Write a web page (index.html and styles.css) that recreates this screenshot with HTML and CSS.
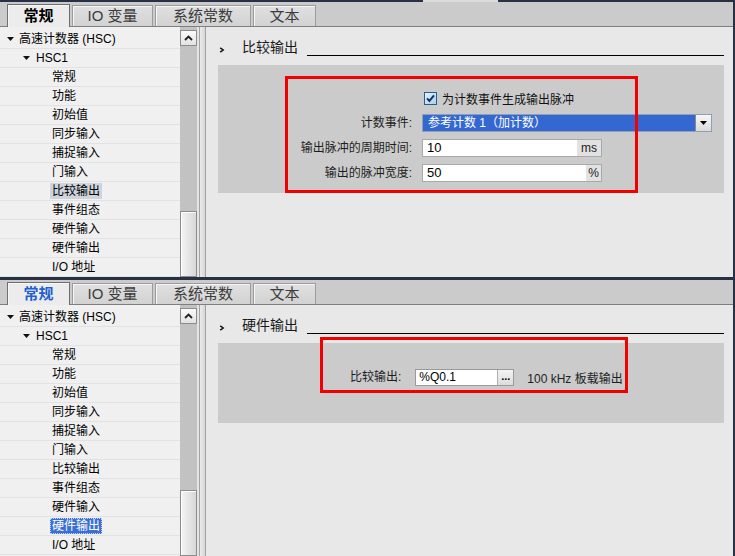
FILE: index.html
```html
<!DOCTYPE html>
<html lang="zh">
<head>
<meta charset="utf-8">
<title>HSC</title>
<link rel="stylesheet" href="styles.css">
</head>
<body>
<div class="topstrip"><div class="strip-piece"></div></div>

<section class="panel panel-top">
  <div class="tabbar">
    <div class="tab t1 active">常规</div>
    <div class="tab t2">IO 变量</div>
    <div class="tab t3">系统常数</div>
    <div class="tab t4">文本</div>
  </div>
  <div class="pbody">
    <div class="tree">
      <div class="row lvl0"><svg class="tri" width="7" height="4" viewBox="0 0 7 4"><path d="M0 0h7L3.5 4z" fill="#111"/></svg><span>高速计数器 (HSC)</span></div>
      <div class="row lvl1"><svg class="tri" width="7" height="4" viewBox="0 0 7 4"><path d="M0 0h7L3.5 4z" fill="#111"/></svg><span>HSC1</span></div>
      <div class="row leaf"><span class="lbl">常规</span></div>
      <div class="row leaf"><span class="lbl">功能</span></div>
      <div class="row leaf"><span class="lbl">初始值</span></div>
      <div class="row leaf"><span class="lbl">同步输入</span></div>
      <div class="row leaf"><span class="lbl">捕捉输入</span></div>
      <div class="row leaf"><span class="lbl">门输入</span></div>
      <div class="row leaf"><span class="lbl sel-inactive">比较输出</span></div>
      <div class="row leaf"><span class="lbl">事件组态</span></div>
      <div class="row leaf"><span class="lbl">硬件输入</span></div>
      <div class="row leaf"><span class="lbl">硬件输出</span></div>
      <div class="row leaf"><span class="lbl">I/O 地址</span></div>
    </div>
    <div class="vscroll">
      <div class="sb-up"><svg width="9" height="6" viewBox="0 0 9 6"><path d="M1 5L4.5 1.5 8 5" fill="none" stroke="#222" stroke-width="1.8"/></svg></div>
      <div class="sb-track"></div>
      <div class="sb-thumb"></div>
    </div>
    <div class="splitter"></div>
    <div class="content">
      <div class="sec-head">
        <div class="chev"><svg width="6" height="6" viewBox="0 0 6 6"><path d="M1.2 0.8L4.2 3 1.2 5.2" fill="none" stroke="#111" stroke-width="1.5"/></svg></div>
        <div class="sec-title">比较输出</div>
        <div class="sec-line"></div>
      </div>
      <div class="group group-top">
        <div class="form">
          <div class="flabel"></div>
          <div class="check-row">
            <svg class="cb" width="13" height="13" viewBox="0 0 13 13"><defs><linearGradient id="cbg" x1="0" y1="0" x2="1" y2="1"><stop offset="0" stop-color="#e8f3fd"/><stop offset="1" stop-color="#a9cdee"/></linearGradient></defs><rect x="0.5" y="0.5" width="12" height="12" fill="url(#cbg)" stroke="#2b5d8c"/><path d="M3 6.4l2.4 2.5 4.6-5.6" fill="none" stroke="#17325f" stroke-width="2"/></svg>
            <span>为计数事件生成输出脉冲</span>
          </div>
          <div class="flabel">计数事件:</div>
          <div class="select">
            <div class="select-text">参考计数 1（加计数）</div>
            <div class="select-btn"><svg width="7" height="4" viewBox="0 0 7 4"><path d="M0 0h7L3.5 4z" fill="#000"/></svg></div>
          </div>
          <div class="flabel">输出脉冲的周期时间:</div>
          <div class="input">
            <div class="input-text">10</div>
            <div class="unit unit-ms">ms</div>
          </div>
          <div class="flabel">输出的脉冲宽度:</div>
          <div class="input">
            <div class="input-text">50</div>
            <div class="unit unit-pct">%</div>
          </div>
        </div>
        <div class="redframe rf-top"></div>
      </div>
    </div>
  </div>
</section>

<section class="panel panel-bottom">
  <div class="tabbar">
    <div class="tab t1 active focus">常规</div>
    <div class="tab t2">IO 变量</div>
    <div class="tab t3">系统常数</div>
    <div class="tab t4">文本</div>
  </div>
  <div class="pbody">
    <div class="tree">
      <div class="row lvl0"><svg class="tri" width="7" height="4" viewBox="0 0 7 4"><path d="M0 0h7L3.5 4z" fill="#111"/></svg><span>高速计数器 (HSC)</span></div>
      <div class="row lvl1"><svg class="tri" width="7" height="4" viewBox="0 0 7 4"><path d="M0 0h7L3.5 4z" fill="#111"/></svg><span>HSC1</span></div>
      <div class="row leaf"><span class="lbl">常规</span></div>
      <div class="row leaf"><span class="lbl">功能</span></div>
      <div class="row leaf"><span class="lbl">初始值</span></div>
      <div class="row leaf"><span class="lbl">同步输入</span></div>
      <div class="row leaf"><span class="lbl">捕捉输入</span></div>
      <div class="row leaf"><span class="lbl">门输入</span></div>
      <div class="row leaf"><span class="lbl">比较输出</span></div>
      <div class="row leaf"><span class="lbl">事件组态</span></div>
      <div class="row leaf"><span class="lbl">硬件输入</span></div>
      <div class="row leaf"><span class="lbl sel-active">硬件输出</span></div>
      <div class="row leaf"><span class="lbl">I/O 地址</span></div>
    </div>
    <div class="vscroll">
      <div class="sb-up"><svg width="9" height="6" viewBox="0 0 9 6"><path d="M1 5L4.5 1.5 8 5" fill="none" stroke="#222" stroke-width="1.8"/></svg></div>
      <div class="sb-track"></div>
      <div class="sb-thumb"></div>
    </div>
    <div class="splitter"></div>
    <div class="content">
      <div class="sec-head">
        <div class="chev"><svg width="6" height="6" viewBox="0 0 6 6"><path d="M1.2 0.8L4.2 3 1.2 5.2" fill="none" stroke="#111" stroke-width="1.5"/></svg></div>
        <div class="sec-title">硬件输出</div>
        <div class="sec-line"></div>
      </div>
      <div class="group group-bottom">
        <div class="hw-row">
          <div class="hw-label">比较输出:</div>
          <div class="input input-hw">
            <div class="input-text">%Q0.1</div>
            <div class="dots">...</div>
          </div>
          <div class="hw-note">100 kHz 板载输出</div>
        </div>
        <div class="redframe rf-bottom"></div>
      </div>
    </div>
  </div>
</section>
</body>
</html>
```

FILE: styles.css
```css
* { box-sizing: border-box; }
html, body { margin: 0; padding: 0; }
body {
  background: #283043;
  width: 735px;
  height: 556px;
  overflow: hidden;
  font-family: "Liberation Sans", "Noto Sans CJK SC", sans-serif;
  font-size: 12px;
  color: #111;
}

.topstrip { height: 2px; display: flex; }
.strip-piece { margin-left: 423px; width: 75px; background: #dcdcdc; }

.panel {
  width: 733px;
  background: #e8e8e8;
  display: flex;
  flex-direction: column;
  overflow: hidden;
}
.panel-top { height: 275px; }
.panel-bottom { height: 276px; margin-top: 3px; }

/* tabs */
.tabbar {
  height: 25px;
  flex: none;
  background: #cbcbcb;
  border-bottom: 1px solid #7f7f7f;
  display: flex;
  align-items: flex-end;
  padding-left: 7px;
  gap: 2px;
}
.tab {
  height: 21px;
  border: 1px solid #9c9c9c;
  border-bottom: none;
  background: linear-gradient(#e0e0e0, #d2d2d2);
  box-shadow: inset 1px 1px 0 #f6f6f6;
  font-size: 15px;
  color: #3c3c3c;
  display: flex;
  align-items: center;
  justify-content: center;
  line-height: 1;
  padding-bottom: 1px;
}
.t1 { width: 63px; }
.t2 { width: 81px; }
.t3 { width: 96px; }
.t4 { width: 63px; }
.tab.active {
  height: 23px;
  margin-bottom: -1px;
  background: #ececec;
  border-color: #6f6f6f;
  font-weight: bold;
  color: #000;
  padding-bottom: 2px;
}
.tab.active.focus { color: #1f5fcf; }

/* body */
.pbody {
  flex: 1;
  min-height: 0;
  display: flex;
  overflow: hidden;
  background: #e4e4e4;
}

.tree {
  width: 180px;
  flex: none;
  background: #f0f0f0;
  padding-top: 3px;
}
.row {
  height: 19px;
  border-bottom: 1px solid #e2e2e2;
  display: flex;
  align-items: center;
  white-space: nowrap;
  line-height: 16px;
  color: #000;
}
.lvl0 { padding-left: 7px; }
.lvl1 { padding-left: 23px; }
.leaf { padding-left: 50px; }
.tri { flex: none; display: block; }
.lvl0 .tri { margin-right: 5px; }
.lvl1 .tri { margin-right: 6px; }
.lbl { padding: 0 2px; height: 16px; line-height: 16px; }
.sel-inactive { background: #cdd4dc; }
.sel-active {
  background: #3b6fd6;
  color: #fff;
  outline: 1px dotted #c9d6f2;
  outline-offset: -1px;
}

/* scrollbar */
.vscroll {
  width: 17px;
  flex: none;
  display: flex;
  flex-direction: column;
  padding-top: 3px;
  background: #c2c2c2;
}
.sb-up {
  height: 16px;
  flex: none;
  border: 1px solid #8c8c8c;
  background: linear-gradient(#fbfbfb, #e2e2e2);
  display: flex;
  align-items: center;
  justify-content: center;
}
.sb-track { flex: 1; background: #c2c2c2; }
.sb-thumb {
  height: 66px;
  flex: none;
  border: 1px solid #8c8c8c;
  background: linear-gradient(90deg, #f4f4f4, #d7d7d7);
  box-shadow: inset 1px 1px 0 #ffffff;
}

.splitter {
  width: 7px;
  flex: none;
  margin-left: 2px;
  border-left: 1px solid #a3a3a3;
  border-right: 1px solid #a3a3a3;
  background: linear-gradient(90deg, #ececec, #d6d6d6);
}

/* content */
.content {
  flex: 1;
  min-width: 0;
  background: #e8e8e8;
  padding: 0 9px 0 12px;
}
.sec-head {
  height: 29px;
  display: flex;
  align-items: flex-end;
}
.chev { width: 24px; height: 29px; flex: none; }
.chev svg { display: block; margin: 20px 0 0 1px; }
.sec-title {
  font-size: 14px;
  line-height: 18px;
  margin-bottom: 1px;
  padding-right: 9px;
  color: #1a1a1a;
  font-family: "Noto Sans CJK SC", sans-serif;
}
.sec-line { flex: 1; height: 1px; background: #000; }

.group {
  margin-top: 9px;
  background: #cbcbcb;
  position: relative;
}
.group-top { height: 128px; }
.group-bottom { height: 80px; }

.form {
  display: grid;
  grid-template-columns: 122px auto;
  grid-auto-rows: 18px;
  column-gap: 10px;
  row-gap: 7px;
  padding: 24px 0 0 72px;
  align-items: center;
}
.flabel {
  text-align: right;
  line-height: 18px;
  color: #1e1e1e;
  white-space: nowrap;
}
.check-row {
  display: flex;
  align-items: center;
  gap: 5px;
  padding-left: 2px;
  color: #111;
}
.cb { display: block; flex: none; }

.select {
  width: 290px;
  height: 18px;
  border: 1px solid #8f9fb8;
  background: #3468d0;
  display: flex;
}
.select-text {
  flex: 1;
  color: #fff;
  padding-left: 5px;
  line-height: 16px;
  white-space: nowrap;
}
.select-btn {
  width: 16px;
  flex: none;
  background: linear-gradient(#f7f7f7, #dadada);
  border-left: 1px solid #8a8a8a;
  display: flex;
  align-items: center;
  justify-content: center;
}

.input {
  width: 180px;
  height: 18px;
  border: 1px solid #a9a9a9;
  background: #fff;
  display: flex;
}
.input-text {
  flex: 1;
  padding-left: 4px;
  line-height: 16px;
  font-size: 13px;
  color: #000;
}
.unit {
  flex: none;
  background: #e2e2e2;
  line-height: 16px;
  font-size: 12px;
  text-align: center;
  color: #222;
}
.unit-ms { width: 24px; }
.unit-pct { width: 15px; }

.hw-row {
  display: flex;
  align-items: center;
  padding: 26px 0 0 132px;
}
.hw-label { color: #1e1e1e; line-height: 17px; margin-right: 14px; }
.input-hw { width: 99px; height: 17px; border-color: #9a9a9a; }
.input-hw .input-text { padding-left: 3px; line-height: 15px; font-size: 12px; }
.dots {
  width: 16px;
  flex: none;
  border-left: 1px solid #b0b0b0;
  background: linear-gradient(#f4f4f4, #dcdcdc);
  font-weight: bold;
  font-size: 11px;
  line-height: 12px;
  text-align: center;
  color: #000;
}
.hw-note { margin-left: 13px; color: #1e1e1e; white-space: nowrap; }

.redframe {
  position: absolute;
  border: 3px solid #f20000;
  pointer-events: none;
}
.rf-top { left: 67px; top: 11px; width: 353px; height: 117px; }
.rf-bottom { left: 102px; top: -6px; width: 308px; height: 56px; }
```
